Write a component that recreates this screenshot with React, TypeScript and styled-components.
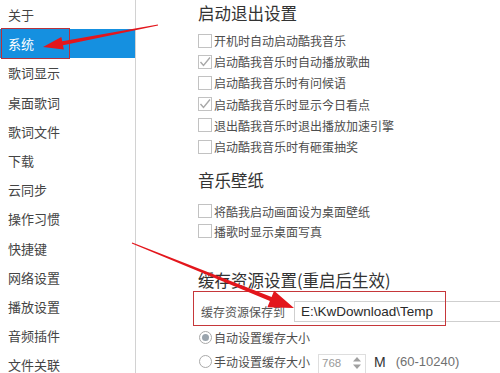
import * as React from "react";
import styled, { createGlobalStyle } from "styled-components";

const GlobalStyle = createGlobalStyle`
  html, body {
    margin: 0;
    padding: 0;
    background: #fff;
    overflow: hidden;
  }
  body {
    font-family: "Noto Sans CJK SC", "Noto Sans", sans-serif;
    color: #333;
  }
`;

const Page = styled.div`
  position: relative;
  display: flex;
  width: 500px;
  height: 373px;
  overflow: hidden;
`;

const Sidebar = styled.ul`
  list-style: none;
  margin: 0;
  padding: 0;
  width: 135px;
  flex: none;
  border-right: 1px solid #d2d2d2;
`;

const NavItem = styled.li<{ $active?: boolean }>`
  position: relative;
  display: flex;
  align-items: center;
  height: 29.2px;
  padding-left: 8px;
  font-size: 13px;
  color: ${(p) => (p.$active ? "#fff" : "#444")};
  background: ${(p) => (p.$active ? "#1590e0" : "transparent")};
`;

// red annotation frame drawn over the selected nav item
const NavFrame = styled.span`
  position: absolute;
  left: 1px;
  top: -1px;
  width: 69px;
  height: 31px;
  box-sizing: border-box;
  border: 1px solid #b8323c;
`;

const Content = styled.div`
  flex: 1;
  padding-left: 62px;
  display: flex;
  flex-direction: column;
`;

const Heading = styled.h2<{ $top: number }>`
  margin: ${(p) => p.$top}px 0 0;
  height: 22px;
  line-height: 22px;
  font-size: 16.5px;
  font-weight: normal;
  color: #333;
  white-space: nowrap;
`;

const List = styled.div<{ $top: number; $row: number }>`
  display: flex;
  flex-direction: column;
  margin-top: ${(p) => p.$top}px;
  & > * {
    height: ${(p) => p.$row}px;
  }
`;

const Option = styled.label`
  display: flex;
  align-items: center;
  gap: 2px;
  font-size: 12px;
  color: #4d4d4d;
  white-space: nowrap;
`;

const Box = styled.span`
  display: flex;
  align-items: center;
  justify-content: center;
  width: 12px;
  height: 12px;
  border: 1px solid #c2c2c2;
  background: #fff;
  flex: none;
`;

const Radio = styled.span<{ $on?: boolean }>`
  display: flex;
  align-items: center;
  justify-content: center;
  width: 11px;
  height: 11px;
  margin-left: 1px;
  border: 1px solid #a9a9a9;
  border-radius: 50%;
  background: #fff;
  flex: none;
  &::after {
    content: "";
    width: 7px;
    height: 7px;
    border-radius: 50%;
    background: ${(p) => (p.$on ? "#9aa4ad" : "transparent")};
  }
`;

const PathRow = styled.div`
  position: relative;
  display: flex;
  align-items: center;
  height: 35px;
  padding: 10px 0 4px 3px;
  box-sizing: border-box;
`;

const PathLabel = styled.span`
  width: 93px;
  flex: none;
  font-size: 12px;
  color: #555;
  white-space: nowrap;
`;

const PathInput = styled.div`
  flex: 1;
  height: 21px;
  box-sizing: border-box;
  border: 1px solid #cfcfcf;
  border-right: none;
  padding-left: 6px;
  display: flex;
  align-items: center;
  font-family: "Liberation Sans", Arial, sans-serif;
  font-size: 13.5px;
  color: #2a2a2a;
  white-space: nowrap;
`;

const Highlight = styled.div`
  position: absolute;
  left: -5px;
  top: 0;
  width: 253px;
  height: 35px;
  box-sizing: border-box;
  border: 1px solid #c6373a;
  pointer-events: none;
`;

const SizeRow = styled.div`
  display: flex;
  align-items: center;
`;

const NumberBox = styled.div`
  display: flex;
  align-items: flex-start;
  justify-content: space-between;
  width: 48px;
  height: 24px;
  margin: 4px 0 0 8px;
  align-self: flex-start;
  box-sizing: border-box;
  border: 1px solid #dedede;
  padding: 1px 4px 0 3px;
  line-height: 14px;
  font-family: "Liberation Sans", Arial, sans-serif;
  font-size: 11.5px;
  color: #9a9a9a;
  & > svg {
    margin-top: 1px;
  }
`;

const Unit = styled.span`
  margin-left: 8px;
  font-family: "Liberation Sans", Arial, sans-serif;
  font-size: 14px;
  color: #333;
`;

const Range = styled.span`
  margin-left: 10px;
  font-family: "Liberation Sans", Arial, sans-serif;
  font-size: 13px;
  color: #707070;
`;

const Overlay = styled.svg`
  position: absolute;
  left: 0;
  top: 0;
  pointer-events: none;
`;

const Mark = () => (
  <svg width="12" height="12" viewBox="0 0 12 12">
    <polyline points="1.5,6 4.5,9.5 11,1.5" fill="none" stroke="#a8a8a8" strokeWidth="1.4" />
  </svg>
);

const Check = ({ on, text }: { on?: boolean; text: string }) => (
  <Option>
    <Box>{on && <Mark />}</Box>
    {text}
  </Option>
);

const navItems = [
  "关于",
  "系统",
  "歌词显示",
  "桌面歌词",
  "歌词文件",
  "下载",
  "云同步",
  "操作习惯",
  "快捷键",
  "网络设置",
  "播放设置",
  "音频插件",
  "文件关联",
];

const App = (): JSX.Element => {
  return (
    <>
      <GlobalStyle />
      <Page>
        <Sidebar>
          {navItems.map((item) => (
            <NavItem key={item} $active={item === "系统"}>
              {item}
              {item === "系统" && <NavFrame />}
            </NavItem>
          ))}
        </Sidebar>

        <Content>
          <Heading $top={2}>启动退出设置</Heading>
          <List $top={6} $row={21.2}>
            <Check text="开机时自动启动酷我音乐" />
            <Check on text="启动酷我音乐时自动播放歌曲" />
            <Check text="启动酷我音乐时有问候语" />
            <Check on text="启动酷我音乐时显示今日看点" />
            <Check text="退出酷我音乐时退出播放加速引擎" />
            <Check text="启动酷我音乐时有砸蛋抽奖" />
          </List>

          <Heading $top={11.6}>音乐壁纸</Heading>
          <List $top={10.7} $row={20}>
            <Check text="将酷我启动画面设为桌面壁纸" />
            <Check text="播歌时显示桌面写真" />
          </List>

          <Heading $top={27.3}>缓存资源设置(重启后生效)</Heading>
          <PathRow>
            <PathLabel>缓存资源保存到</PathLabel>
            <PathInput>E:\KwDownload\Temp</PathInput>
            <Highlight />
          </PathRow>
          <List $top={0} $row={24}>
            <Option>
              <Radio $on />
              自动设置缓存大小
            </Option>
            <SizeRow>
              <Option>
                <Radio />
                手动设置缓存大小
              </Option>
              <NumberBox>
                768
                <svg width="8" height="12" viewBox="0 0 8 12">
                  <polygon points="4,0 8,4.5 0,4.5" fill="#a0a0a0" />
                  <polygon points="0,7.5 8,7.5 4,12" fill="#a0a0a0" />
                </svg>
              </NumberBox>
              <Unit>M</Unit>
              <Range>(60-10240)</Range>
            </SizeRow>
          </List>
        </Content>

        <Overlay width="500" height="373" viewBox="0 0 500 373">
          <polygon
            fill="#e3161c"
            points="43,47 63.8,49.4 63.0,45.2 158.1,25.4 157.9,24.6 62.3,41.3 61.3,36.9"
          />
          <polygon
            fill="#e3161c"
            points="294,308 267.4,307.3 269.9,301.1 131.8,243.5 132.2,242.5 271.6,297.0 274.1,290.7"
          />
        </Overlay>
      </Page>
    </>
  );
};

export default App;
